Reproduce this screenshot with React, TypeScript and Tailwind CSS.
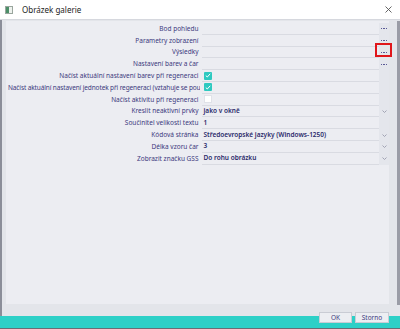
const rows: { label: string; kind: "dots" | "check" | "empty" | "text" | "select"; value?: string; left?: boolean }[] = [
  { label: "Bod pohledu", kind: "dots" },
  { label: "Parametry zobrazení", kind: "dots" },
  { label: "Výsledky", kind: "dots" },
  { label: "Nastavení barev a čar", kind: "dots" },
  { label: "Načíst aktuální nastavení barev při regeneraci", kind: "check" },
  { label: "Načíst aktuální nastavení jednotek při regeneraci (vztahuje se pou", kind: "check", left: true },
  { label: "Načíst aktivitu při regeneraci", kind: "empty" },
  { label: "Kreslit neaktivní prvky", kind: "select", value: "jako v okně" },
  { label: "Součinitel velikosti textu", kind: "text", value: "1" },
  { label: "Kódová stránka", kind: "select", value: "Středoevropské jazyky (Windows-1250)" },
  { label: "Délka vzoru čar", kind: "select", value: "3" },
  { label: "Zobrazit značku GSS", kind: "select", value: "Do rohu obrázku" },
]

const Chevron = () => (
  <svg width="5" height="3" viewBox="0 0 5 3">
    <path d="M0.5 0.5 L2.5 2.5 L4.5 0.5" fill="none" stroke="#9a9cae" strokeWidth="0.9" />
  </svg>
)

const Dots = () => (
  <div className="flex gap-[1px]">
    <div className="w-[1.5px] h-[1.2px] bg-[#5a5a96]"></div>
    <div className="w-[1.5px] h-[1.2px] bg-[#5a5a96]"></div>
    <div className="w-[1.5px] h-[1.2px] bg-[#5a5a96]"></div>
  </div>
)

const App = () => {
  return (
    <div className="relative w-[400px] h-[329px] overflow-hidden bg-[#e3e5ea] flex flex-col font-['Noto_Sans',sans-serif]">
      {/* title bar */}
      <div className="h-[20px] bg-white flex items-center border-b border-[#d6d8de] shrink-0">
        <div className="ml-[5px] w-[8px] h-[8px] border border-[#9aa69e] bg-[#eef2ee] flex">
          <div className="w-[3px] h-full bg-[#4c8f68]"></div>
        </div>
        <span className="ml-[9px] text-[8px] text-[#222] leading-[10px]">Obrázek galerie</span>
        <div className="ml-auto mr-[8px]">
          <svg width="7" height="7" viewBox="0 0 7 7">
            <path d="M0.5 0.5 L6.5 6.5 M6.5 0.5 L0.5 6.5" stroke="#555" strokeWidth="0.9" />
          </svg>
        </div>
      </div>

      {/* body */}
      <div className="flex flex-1">
        <div className="w-[2px] bg-[#8b8e99]"></div>
        <div className="flex-1 flex flex-col pl-[4px] pt-[1px]">
          <div className="flex flex-1">
            <div className="w-[383px] h-[283px] bg-[#ecedf2] pt-[2px]">
              {rows.map((r, i) => (
                <div key={i} className="flex h-[11.8px] items-center">
                  <div
                    className={`w-[194px] overflow-hidden whitespace-nowrap text-[6.5px] leading-[10px] text-[#3c3a7e] ${r.left ? "text-left pl-[2px] tracking-[-0.12px]" : "text-right pr-[1px]"}`}
                  >
                    {r.label}
                  </div>
                  <div className="ml-[2px] w-[178px] h-full flex items-center border-b border-[#d9dbe2]">
                    {r.kind === "check" && (
                      <div className="ml-[2px] w-[8px] h-[8px] bg-[#2ec9c0] rounded-[1px] flex items-center justify-center">
                        <svg width="6" height="5" viewBox="0 0 6 5">
                          <path d="M0.8 2.6 L2.3 4 L5.2 0.8" fill="none" stroke="white" strokeWidth="1" />
                        </svg>
                      </div>
                    )}
                    {r.kind === "empty" && (
                      <div className="ml-[2px] w-[8px] h-[8px] bg-white border border-[#e0e2e8]"></div>
                    )}
                    {(r.kind === "text" || r.kind === "select") && (
                      <span className="ml-[2px] text-[6.5px] leading-[10px] font-semibold text-[#2a2a6a]">{r.value}</span>
                    )}
                  </div>
                  <div className="w-[10px] h-full flex items-center justify-center bg-[#e4e6ec]">
                    {r.kind === "dots" && <Dots />}
                    {r.kind === "select" && <Chevron />}
                  </div>
                </div>
              ))}
            </div>
            <div className="w-[8px]"></div>
            <div className="w-[3px] bg-[#9a9ca6]"></div>
          </div>
          <div className="h-[11px]"></div>
        </div>
      </div>

      {/* bottom strip */}
      <div className="h-[12px] bg-[#2dd0c7] shrink-0"></div>
      <div className="h-[1px] bg-[#6a6d75] shrink-0"></div>

      {/* dialog buttons over the strip */}
      <div className="absolute left-[319px] top-[312px] flex gap-[3px]">
        <div className="w-[33px] h-[11px] bg-[#eceef2] border border-[#c9ccd4] flex items-center justify-center text-[6.5px] leading-[10px] text-[#3c3a7e]">
          OK
        </div>
        <div className="w-[34px] h-[11px] bg-[#eceef2] border border-[#c9ccd4] flex items-center justify-center text-[6.5px] leading-[10px] text-[#3c3a7e]">
          Storno
        </div>
      </div>

      {/* red highlight around the third "..." */}
      <div className="absolute left-[375px] top-[43px] w-[17px] h-[14px] border-2 border-[#e0161b]"></div>
    </div>
  )
}

export default App
